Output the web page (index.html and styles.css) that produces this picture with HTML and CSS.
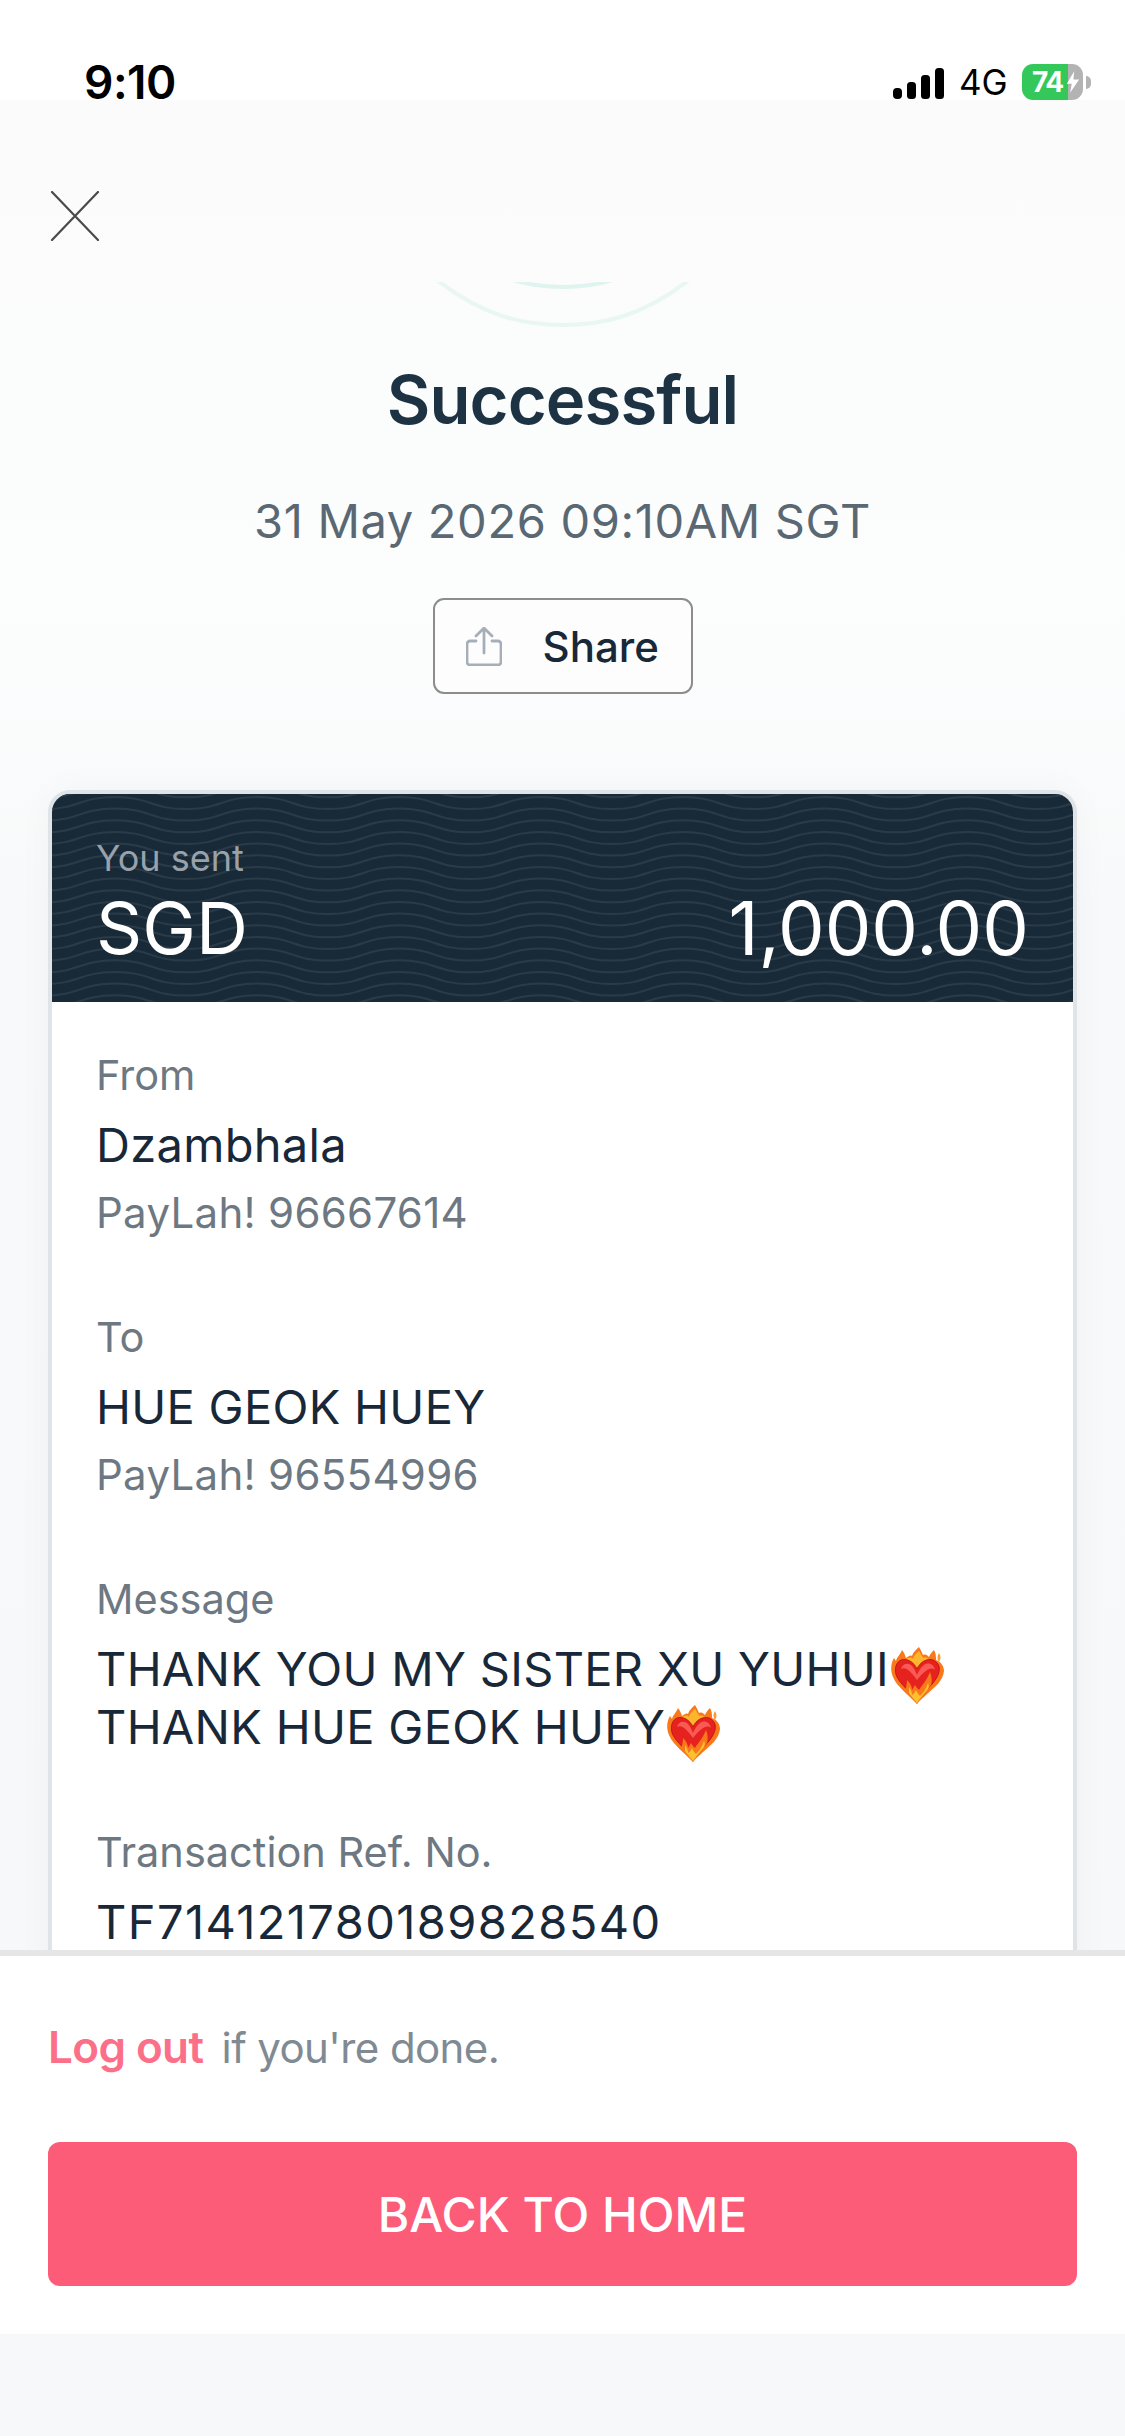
FILE: index.html
```html
<!DOCTYPE html>
<html lang="en">
<head>
<meta charset="utf-8">
<title>Successful</title>
<link rel="stylesheet" href="styles.css">
</head>
<body>
<div class="app">
  <header class="status">
    <span class="time">9:10</span>
    <div class="status-right">
      <svg class="signal" width="51" height="31" viewBox="0 0 51 31"><rect x="0" y="20" width="9" height="11" rx="4" fill="#000"/><rect x="14" y="14" width="9" height="17" rx="3.5" fill="#000"/><rect x="28" y="7" width="9" height="24" rx="3.5" fill="#000"/><rect x="42" y="0" width="9" height="31" rx="3.5" fill="#000"/></svg>
      <span class="net">4G</span>
      <div class="battery">
        <div class="battery-body"><span class="battery-text">74</span>
          <svg class="bolt" width="14" height="22" viewBox="0 0 17 26"><path d="M10 0 1 15h6l-2 11 11-16H9z" fill="#fff"/></svg>
        </div>
        <span class="battery-nub"></span>
      </div>
    </div>
  </header>

  <main class="scroll">
    <button class="close" aria-label="Close">
      <svg width="50" height="50" viewBox="0 0 50 50"><path d="M2 1 48 49M48 1 2 49" stroke="#4a4a4a" stroke-width="2.2" stroke-linecap="round" fill="none"/></svg>
    </button>
    <svg class="arcs" width="260" height="48" viewBox="0 0 260 48">
      <path d="M4-2C50 34 90 43 130 43S210 34 256-2" fill="none" stroke="#e8f7f3" stroke-width="4"/>
      <path d="M80-2C100 4 115 5 130 5S160 4 180-2" fill="none" stroke="#dff4ef" stroke-width="4"/>
    </svg>
    <h1 class="title">Successful</h1>
    <p class="date">31 May 2026 09:10AM SGT</p>
    <button class="share">
      <svg width="36" height="39" viewBox="0 0 36 39"><path d="M10 14H4a3 3 0 0 0-3 3v18a3 3 0 0 0 3 3h28a3 3 0 0 0 3-3V17a3 3 0 0 0-3-3h-6M18 26V2M10 9l8-8 8 8" fill="none" stroke="#a6afb8" stroke-width="2.8" stroke-linecap="round" stroke-linejoin="round"/></svg>
      <span>Share</span>
    </button>

    <section class="card">
      <div class="card-head">
        <svg class="waves" width="100%" height="100%"><defs><pattern id="wave" width="142" height="35" patternUnits="userSpaceOnUse" patternTransform="translate(-8 0)"><path d="M0 3.3C35.5 3.3 35.5-8.7 71-8.7S106.5 3.3 142 3.3M0 15C35.5 15 35.5 3 71 3S106.5 15 142 15M0 26.6C35.5 26.6 35.5 14.6 71 14.6S106.5 26.6 142 26.6M0 38.3C35.5 38.3 35.5 26.3 71 26.3S106.5 38.3 142 38.3M0 50C35.5 50 35.5 38 71 38S106.5 50 142 50" fill="none" stroke="#293a49" stroke-width="2"/></pattern></defs><rect width="100%" height="100%" fill="url(#wave)"/></svg>
        <div class="head-label">You sent</div>
        <div class="head-row"><span class="currency">SGD</span><span>1,000.00</span></div>
      </div>
      <div class="card-body">
        <div class="field">
          <div class="label">From</div>
          <div class="value">Dzambhala</div>
          <div class="sub">PayLah! 96667614</div>
        </div>
        <div class="field">
          <div class="label">To</div>
          <div class="value">HUE GEOK HUEY</div>
          <div class="sub">PayLah! 96554996</div>
        </div>
        <div class="field field-msg">
          <div class="label">Message</div>
          <div class="value">THANK YOU MY SISTER XU YUHUI<svg class="heart" width="53" height="57" viewBox="0 0 53 57"><use href="#fireheart"/></svg></div>
          <div class="value">THANK HUE GEOK HUEY<svg class="heart" width="53" height="57" viewBox="0 0 53 57"><use href="#fireheart"/></svg></div>
        </div>
        <div class="field">
          <div class="label">Transaction Ref. No.</div>
          <div class="value value-ref">TF714121780189828540</div>
        </div>
      </div>
    </section>
  </main>

  <footer class="footer">
    <p class="logout"><span class="logout-link">Log out</span> <span>if you're done.</span></p>
    <button class="home">BACK TO HOME</button>
  </footer>
  <div class="home-space"></div>
</div>
<svg class="defs" width="0" height="0">
  <defs>
    <g id="fireheart">
      <path d="M26 57C18 48 6 40 2 30-1 23 0 16 3 11L5 14C6 10 9 8 11 3 13 5 14 8 15 11 18 9 19 8 21 9 22 5 25 3 28 0 30 3 31 6 32 8 35 7 36 8 38 10 39 7 41 5 43 3 45 6 45 10 45 13 50 15 53 19 53 24 52 34 44 40 36 47 32 51 29 53 26 57Z" fill="#f8791c"/>
      <path d="M15 13C18 10 20 10 22 12 23 8 26 6 28 4 30 7 31 10 33 11 35 10 37 11 38 13L26 22Z" fill="#fcb62e"/>
      <path d="M26 22C23 15 16 11 10 13 4 16 3 24 6 30 10 38 19 44 26 54 33 44 42 38 46 30 50 23 49 16 42 13 36 11 29 15 26 22Z" fill="#e6221f" stroke="#c81414"/>
      <path d="M10 22C11 17 17 15 21 19 24 22 25 26 26 28 27 26 29 21 33 18 37 15 43 17 44 23 40 19 33 24 26 33 20 24 14 19 10 22Z" fill="#fa5a55"/>
      <path d="M26 57C22 52 18 48 14 44 15 41 16 37 16 33 20 37 21 40 21 43 22 41 23 40 24 38 25 40 27 42 28 43 31 38 36 33 39 25 41 30 41 34 40 38 36 44 30 50 26 57Z" fill="#f8791c"/>
      <path d="M26 56C23 52 20 49 18 46 18 44 18 42 18 40 20 43 21 45 21 48 23 47 24 45 25 43 26 46 28 48 29 49 32 46 35 42 37 36 38 38 38 40 37 42 33 47 29 51 26 56Z" fill="#fcc12e"/>
      <path d="M48 6C50 9 50 12 48 15 46 12 46 9 48 6Z" fill="#fb9a2c"/>
    </g>
  </defs>
</svg>
</body>
</html>
```

FILE: styles.css
```css
* { box-sizing: border-box; }
html, body { margin: 0; padding: 0; }
body { width: 1125px; height: 2436px; overflow: hidden; background: #f7f8fa; font-family: Inter, "Noto Sans", sans-serif; }
button { font-family: inherit; cursor: pointer; }
.app { width: 1125px; height: 2436px; display: flex; flex-direction: column; }
.defs { display: block; height: 0; }

.status { height: 100px; flex: none; background: #fff; display: flex; justify-content: space-between; align-items: center; padding: 64px 34px 0 84px; }
.time { font-size: 46px; line-height: 36px; font-weight: 600; color: #000; letter-spacing: -.5px; }
.status-right { display: flex; align-items: center; height: 36px; }
.signal { margin-right: 15px; margin-top: 3px; }
.net { font-size: 35px; line-height: 36px; color: #000; width: 48px; margin-right: 15px; }
.battery { display: flex; align-items: center; gap: 3px; }
.battery-body { width: 61px; height: 36px; border-radius: 11px; background: linear-gradient(90deg, #34c85a 46px, #b3b3b3 46px); display: flex; align-items: center; padding-left: 10px; position: relative; }
.battery-text { font-size: 28px; line-height: 36px; font-weight: 700; color: #fff; letter-spacing: -1.5px; }
.bolt { margin-left: 3px; flex: none; }
.battery-nub { width: 5px; height: 13px; background: #b3b3b3; border-radius: 0 5px 5px 0; }

.scroll { flex: none; height: 1850px; overflow: hidden; background: linear-gradient(#fbfbfb 0, #fcfdfd 500px, #f8f9fa 800px, #f7f8fa 100%); display: flex; flex-direction: column; align-items: center; }
.close { align-self: flex-start; margin: 91px 0 0 50px; padding: 0; border: 0; background: none; width: 50px; height: 50px; display: block; }
.arcs { flex: none; display: block; margin-top: 41px; }
.title { margin: 30px 0 0; font-size: 67px; line-height: 80px; font-weight: 600; letter-spacing: -.9px; color: #1d3242; }
.date { margin: 54px 0 0; font-size: 47px; line-height: 54px; color: #5a6873; letter-spacing: .65px; white-space: nowrap; }
.share { margin-top: 50px; width: 260px; height: 96px; flex: none; border: 2px solid #8c8c8c; border-radius: 11px; background: #fdfdfe; padding: 0 0 0 31px; display: flex; align-items: center; gap: 41px; font-size: 42px; font-weight: 500; color: #192838; }
.card { margin-top: 96px; width: 1029px; flex: none; border: 4px solid #dfe4e8; border-bottom: 0; border-radius: 22px 22px 0 0; background: #fff; box-shadow: 0 0 36px rgba(30, 50, 70, .035); overflow: hidden; }
.card-head { position: relative; height: 208px; background: #182937; padding: 44px 44px 0; color: #fff; }
.waves { position: absolute; left: 0; top: 0; }
.head-label, .head-row { position: relative; }
.head-label { font-size: 36px; line-height: 41px; color: #98a2ab; }
.head-row { display: flex; justify-content: space-between; font-size: 74px; line-height: 82px; margin-top: 8px; }
.currency { font-size: 72px; }
.card-body { padding: 48px 44px 300px; }
.field { margin-bottom: 74px; }
.field-msg { margin-bottom: 71px; }
.label { font-size: 41.5px; line-height: 50px; color: #6d7882; }
.value { font-size: 47px; line-height: 58px; color: #192838; margin-top: 16px; letter-spacing: .3px; white-space: nowrap; }
.value-ref { letter-spacing: 1.4px; }
.field-msg .value + .value { margin-top: 0; }
.sub { font-size: 42px; line-height: 50px; color: #6d7882; margin-top: 14px; letter-spacing: .3px; }
.heart { vertical-align: -8px; margin: -10px 0 -10px 2px; }

.footer { flex: none; height: 384px; background: #fff; border-top: 6px solid #e6e6e6; padding: 61px 48px 0; }
.logout { margin: 0; font-size: 42px; line-height: 60px; color: #7f8a93; letter-spacing: -.6px; }
.logout-link { color: #fc6f88; font-weight: 600; margin-right: 7px; font-size: 44px; }
.home { display: block; width: 100%; height: 144px; margin-top: 64px; border: 0; border-radius: 12px; background: #fc5c78; color: #fff; font-size: 48px; font-weight: 500; }
.home-space { flex: 1; background: #f7f8fa; }
```
